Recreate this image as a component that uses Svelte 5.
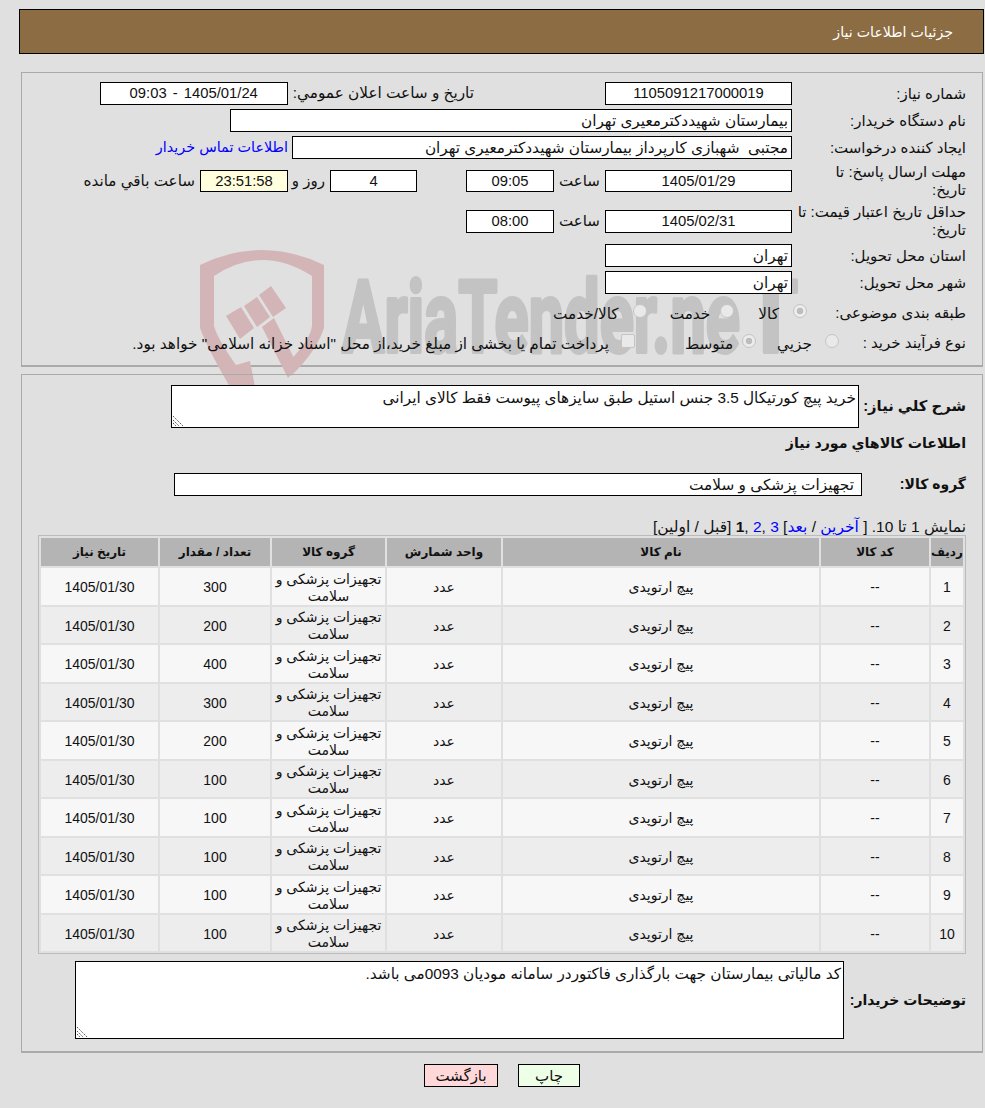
<script>
  const rows = [300,200,400,300,200,100,100,100,100,100];
</script>

<div class="page" dir="rtl">
  <header class="title">جزئیات اطلاعات نیاز</header>

  <section class="panel top">
    <svg class="mark" viewBox="190 245 620 155" aria-hidden="true">
      <path class="shield" d="M200 265 Q262 235 324 265 L324 328 Q316 352 291 376 L284 366 Q310 342 312 326 L312 276 Q262 244 214 276 L214 326 Q218 340 236 365 L250 361 L256 392 L233 392 Q208 350 200 328 Z"/>
      <path class="shield" d="M226 316 L241 307 L254 328 L240 339 Z M244 306 L257 297 L270 317 L257 327 Z M259 295 L271 286 L286 308 L273 317 Z M262 327 L274 318 L298 366 L288 378 Z"/>
      <text class="wm" x="342" y="352" textLength="398" lengthAdjust="spacingAndGlyphs">AriaTender.ne</text>
      <text class="wm" x="744" y="352" textLength="54" lengthAdjust="spacingAndGlyphs">T</text>
    </svg>
    <div class="row r1">
      <span class="label">شماره نیاز:</span>
      <span class="field w187 c">1105091217000019</span>
      <span class="announce">تاریخ و ساعت اعلان عمومي:</span>
      <span class="field w188 c">1405/01/24 - 09:03</span>
    </div>
    <div class="row r2">
      <span class="label">نام دستگاه خریدار:</span>
      <span class="field w562">بیمارستان شهیددکترمعیری تهران</span>
    </div>
    <div class="row r3">
      <span class="label">ایجاد کننده درخواست:</span>
      <span class="field w500">مجتبی&nbsp; شهبازی کارپرداز بیمارستان شهیددکترمعیری تهران</span>
      <a class="link" href="#contact">اطلاعات تماس خریدار</a>
    </div>
    <div class="row r4">
      <span class="label">مهلت ارسال پاسخ: تا تاریخ:</span>
      <span class="field w187 c">1405/01/29</span>
      <span class="hour">ساعت</span>
      <span class="field w88 c">09:05</span>
      <span class="field w87 c days">4</span>
      <span class="txt1">روز و</span>
      <span class="field w88 c timer">23:51:58</span>
      <span class="txt2">ساعت باقي مانده</span>
    </div>
    <div class="row r5">
      <span class="label">حداقل تاریخ اعتبار قیمت: تا تاریخ:</span>
      <span class="field w187 c">1405/02/31</span>
      <span class="hour">ساعت</span>
      <span class="field w88 c">08:00</span>
    </div>
    <div class="row r6">
      <span class="label">استان محل تحویل:</span>
      <span class="field w187">تهران</span>
    </div>
    <div class="row r7">
      <span class="label">شهر محل تحویل:</span>
      <span class="field w187">تهران</span>
    </div>
    <div class="row r8">
      <span class="label">طبقه بندی موضوعی:</span>
      <span class="radios">
        <span class="opt o1"><i class="radio on"></i>کالا</span>
        <span class="opt o2"><i class="radio"></i>خدمت</span>
        <span class="opt o3"><i class="radio"></i>کالا/خدمت</span>
      </span>
    </div>
    <div class="row r9">
      <span class="label">نوع فرآیند خرید :</span>
      <span class="radios">
        <span class="opt p1"><i class="radio"></i>جزیي</span>
        <span class="opt p2"><i class="radio on"></i>متوسط</span>
        <span class="opt p3"><i class="check"></i>پرداخت تمام یا بخشی از مبلغ خرید،از محل "اسناد خزانه اسلامی" خواهد بود.</span>
      </span>
    </div>
  </section>

  <section class="panel bottom">
    <div class="descrow first">
      <span class="blabel">شرح کلي نیاز:</span>
      <div class="area a1">خرید پیچ کورتیکال 3.5 جنس استیل طبق سایزهای پیوست فقط کالای ایرانی<svg class="grip" viewBox="0 0 10 10"><path d="M0 0 L10 10 M0 4 L6 10 M0 7 L3 10"/></svg></div>
    </div>
    <h3>اطلاعات کالاهاي مورد نیاز</h3>
    <div class="grouprow">
      <span class="blabel">گروه کالا:</span>
      <span class="field group">تجهیزات پزشکی و سلامت</span>
    </div>
    <div class="pager">نمایش 1 تا 10. [ <a href="#l">آخرین</a> / <a href="#n">بعد</a>] <a href="#3">3</a> ,<a href="#2">2</a> ,<b>1</b> [قبل / اولین]</div>
    <div class="tablewrap">
      <table>
        <thead>
          <tr>
            <th class="c1">ردیف</th><th class="c2">کد کالا</th><th class="c3">نام کالا</th><th class="c4">واحد شمارش</th><th class="c5">گروه کالا</th><th class="c6">تعداد / مقدار</th><th class="c7">تاریخ نیاز</th>
          </tr>
        </thead>
        <tbody>
          {#each rows as q, i}
            <tr>
              <td>{i + 1}</td><td>--</td><td class="name">پیچ ارتوپدی</td><td>عدد</td><td class="grp">تجهیزات پزشکی و سلامت</td><td>{q}</td><td>1405/01/30</td>
            </tr>
          {/each}
        </tbody>
      </table>
    </div>
    <div class="descrow notes">
      <span class="blabel">توضیحات خریدار:</span>
      <div class="area a2">کد مالیاتی بیمارستان جهت بارگذاری فاکتوردر سامانه مودیان 0093می باشد.<svg class="grip" viewBox="0 0 10 10"><path d="M0 0 L10 10 M0 4 L6 10 M0 7 L3 10"/></svg></div>
    </div>
  </section>

  <div class="actions">
    <button class="print">چاپ</button>
    <button class="back">بازگشت</button>
  </div>
</div>

<style>
  :global(body) { margin: 0; background: #e0e0e0; }
  .page { width: 985px; height: 1108px; box-sizing: border-box; padding: 9px 1px 0 0; font: 15px/1.2 "Liberation Sans", "DejaVu Sans", sans-serif; color: #111; overflow: hidden; }
  a { color: #00f; text-decoration: none; }
  .title { height: 45px; margin-left: 19px; box-sizing: border-box; border: 1px solid #000; background: #8c6c42; color: #fff; font-size: 14.2px; padding: 14px 30px 0 0; }
  .panel { position: relative; margin: 0 1px 0 21px; border: 1px solid #aaa; border-width: 1px 1px 2px 1px; box-sizing: border-box; }
  .top { margin-top: 18px; height: 295px; padding: 9px 16px 0 0; }
  .mark { position: absolute; left: 168px; top: 172px; width: 620px; height: 155px; pointer-events: none; direction: ltr; }
  .shield { fill: #d4b5b7; }
  .wm { font: 700 100px Roboto, sans-serif; fill: #c3c3c3; stroke: #c3c3c3; stroke-width: 4; stroke-linejoin: round; }
  .row { display: flex; align-items: center; position: relative; }
  .label { width: 174px; flex: none; box-sizing: border-box; line-height: 18px; }
  .field { display: block; height: 23px; line-height: 21px; box-sizing: border-box; border: 1px solid #000; background: #fff; padding: 0 3px; white-space: nowrap; flex: none; font-size: 15.3px; }
  .c { text-align: center; font-size: 14.8px; }
  .w187 { width: 187px; }
  .w188 { width: 188px; word-spacing: 2px; }
  .w562 { width: 562px; }
  .w500 { width: 500px; }
  .w88 { width: 88px; }
  .w87 { width: 87px; }
  .r2, .r3 { margin-top: 4px; }
  .link { margin-right: 4px; font-size: 14.4px; }
  .announce { margin: 0 131px 0 5px; flex: none; white-space: nowrap; font-size: 15.3px; }
  .r4 { margin-top: 4px; height: 36px; }
  .r4 .label { padding-left: 10px; }
  .r5 { margin-top: 4px; height: 36px; }
  .hour { width: 51px; text-align: center; flex: none; }
  .days { margin-right: 49px; }
  .txt1 { width: 42px; flex: none; box-sizing: border-box; padding-right: 5px; white-space: nowrap; }
  .txt2 { margin-right: 5px; white-space: nowrap; font-size: 15.2px; }
  .timer { background: #ffd; }
  .r4 .field { height: 22px; }
  .r6 { margin-top: 5px; }
  .r7 { margin-top: 4px; }
  .r8 { margin-top: 4px; height: 30px; }
  .r8 .label { width: 159px; }
  .r9 { height: 30px; }
  .r9 .label { width: 127px; }
  .radios { display: flex; align-items: center; flex: none; padding-top: 2px; font-size: 15.3px; }
  .opt { display: inline-flex; align-items: center; white-space: nowrap; }
  .radio, .check { width: 14px; height: 14px; border: 1px solid #c4c4c4; background: #e9e9e9; box-sizing: border-box; display: inline-block; position: relative; top: -3px; }
  .radio { border-radius: 50%; }
  .radio.on { background: radial-gradient(circle, #bdbdbd 0 3px, #ececec 3.6px); }
  .check { border-radius: 2px; }
  .o1 { gap: 14px; }
  .o2 { gap: 10px; margin-right: 24px; }
  .o3 { gap: 14px; margin-right: 23px; }
  .p1 { gap: 13px; }
  .p2 { gap: 9px; margin-right: 21px; }
  .p3 { gap: 12px; margin-right: 50px; }

  .bottom { margin-top: 7px; height: 679px; padding: 10px 16px 0 16px; font-size: 14px; }
  .descrow { display: flex; align-items: center; }
  .blabel { flex: none; width: 107px; font-weight: bold; white-space: nowrap; }
  .first .blabel { font-size: 14.8px; }
  .area { position: relative; height: 43px; box-sizing: border-box; border: 1px solid #000; background: #fff; padding: 3px 2px; flex: none; width: 688px; font-size: 15.3px; }
  .grip { position: absolute; left: 1px; bottom: 1px; width: 10px; height: 10px; fill: none; stroke: #555; stroke-width: 1; stroke-dasharray: 1.5 1; }
  h3 { margin: 6px 0 0; font-size: 14.2px; font-weight: bold; height: 39px; line-height: 18px; }
  .grouprow { display: flex; align-items: center; }
  .grouprow .blabel { width: 104px; }
  .group { width: 688px; padding-right: 7px; }
  .pager { margin-top: 23px; height: 16px; line-height: 16px; font-size: 15.5px; }
  .tablewrap { border: 1px solid #bbb; width: 928px; box-sizing: border-box; }
  table { width: 926px; border-collapse: separate; border-spacing: 2px; table-layout: fixed; font-size: 14px; }
  th { background: #b4b4b4; font-weight: bold; font-size: 12px; height: 28px; padding: 0; }
  td { height: 36.5px; padding: 2.5px 3px 0; text-align: center; line-height: 17px; box-sizing: border-box; }
  tbody tr:nth-child(odd) td { background: #f7f7f7; }
  tbody tr:nth-child(even) td { background: #ededed; }
  .c1 { width: 32px; } .c2 { width: 108px; } .c3 { width: 316px; } .c4 { width: 114px; } .c5 { width: 113px; } .c6 { width: 110px; } .c7 { width: 117px; }
  .notes { margin-top: 7px; }
  .notes .blabel { width: 122px; }
  .a2 { height: 78px; width: 769px; }
  .actions { display: flex; gap: 20px; margin-top: 11px; padding-right: 404px; }
  button { height: 23px; border: 1px solid #000; font: 15px "Liberation Sans", "DejaVu Sans", sans-serif; padding: 0; color: #111; }
  .print { width: 62px; background: #eeffe8; }
  .back { width: 74px; background: #ffd9d9; }
</style>
